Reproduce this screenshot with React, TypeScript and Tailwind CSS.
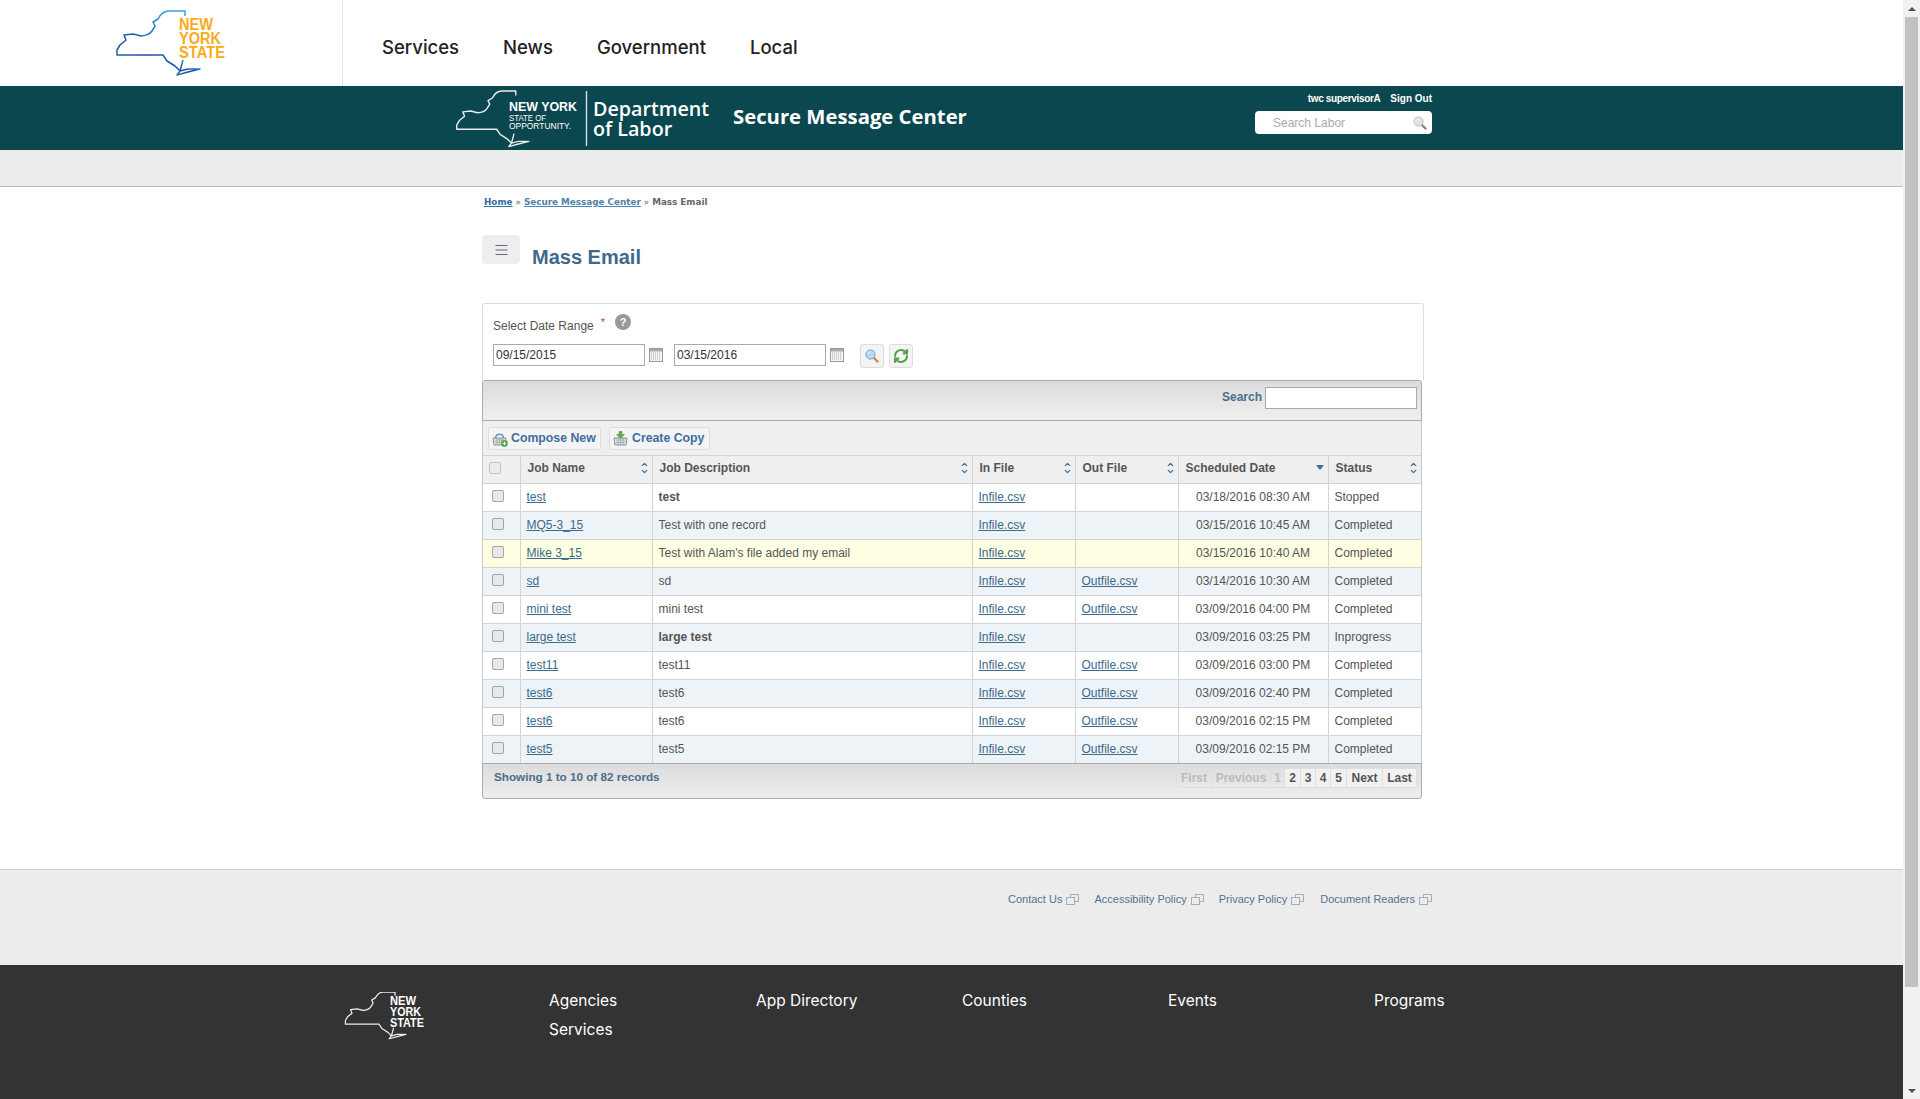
import { ChevronDown, ChevronUp, RefreshCw } from 'lucide-react';

const arial = 'font-["Liberation_Sans",Arial,sans-serif]';

const rows = [
  { name: 'test', desc: 'test', bold: true, out: false, date: '03/18/2016 08:30 AM', status: 'Stopped', bg: 'bg-white' },
  { name: 'MQ5-3_15', desc: 'Test with one record', bold: false, out: false, date: '03/15/2016 10:45 AM', status: 'Completed', bg: 'bg-[#eef3f8]' },
  { name: 'Mike 3_15', desc: "Test with Alam's file added my email", bold: false, out: false, date: '03/15/2016 10:40 AM', status: 'Completed', bg: 'bg-[#fefee2]' },
  { name: 'sd', desc: 'sd', bold: false, out: true, date: '03/14/2016 10:30 AM', status: 'Completed', bg: 'bg-[#eef3f8]' },
  { name: 'mini test', desc: 'mini test', bold: false, out: true, date: '03/09/2016 04:00 PM', status: 'Completed', bg: 'bg-white' },
  { name: 'large test', desc: 'large test', bold: true, out: false, date: '03/09/2016 03:25 PM', status: 'Inprogress', bg: 'bg-[#eef3f8]' },
  { name: 'test11', desc: 'test11', bold: false, out: true, date: '03/09/2016 03:00 PM', status: 'Completed', bg: 'bg-white' },
  { name: 'test6', desc: 'test6', bold: false, out: true, date: '03/09/2016 02:40 PM', status: 'Completed', bg: 'bg-[#eef3f8]' },
  { name: 'test6', desc: 'test6', bold: false, out: true, date: '03/09/2016 02:15 PM', status: 'Completed', bg: 'bg-white' },
  { name: 'test5', desc: 'test5', bold: false, out: true, date: '03/09/2016 02:15 PM', status: 'Completed', bg: 'bg-[#eef3f8]' },
];

const pages = [
  { label: 'First', width: 'w-[34px]', off: true },
  { label: 'Previous', width: 'w-[59px]', off: true },
  { label: '1', width: 'w-[14px]', off: true },
  { label: '2', width: 'w-[16px]', off: false },
  { label: '3', width: 'w-[15px]', off: false },
  { label: '4', width: 'w-[15px]', off: false },
  { label: '5', width: 'w-[16px]', off: false },
  { label: 'Next', width: 'w-[36px]', off: false },
  { label: 'Last', width: 'w-[34px]', off: false },
];

// state outline, units are px of the big header logo
function NyOutline({ stroke, width = 1.5 }: Readonly<{ stroke: string; width?: number }>) {
  return (
    <g fill="none" stroke={stroke} strokeWidth={width} strokeLinejoin="round">
      <path d="M85 16 L85 11 L69 11 C64 11 60 15 58 19 L53 22 L55 26 L52 31 C50 34 45 36 41 36 L33 34 L24 35 L26 40 L20 45 L17 50 L17 55 L63 55 L67 61 L75 66 L80 71" />
      <path d="M83 60 L80 71 L77 75 L88 72 L100 69 L88 69 L80 71" />
    </g>
  );
}

function SortIcon() {
  return (
    <span className="flex flex-col items-center text-[#47708f]">
      <ChevronUp size={9} strokeWidth={3.5} className="-mb-[2px]" />
      <ChevronDown size={9} strokeWidth={3.5} />
    </span>
  );
}

function CalendarIcon() {
  return (
    <svg width="14" height="14" viewBox="0 0 14 14" className="shrink-0">
      <rect x="0.5" y="0.5" width="13" height="13" fill="#f4f4f4" stroke="#999" />
      <rect x="1" y="1" width="12" height="2.5" fill="#aaa" />
      {[5, 7, 9, 11].map(y => (
        <path key={y} d={`M2 ${y}H12`} stroke="#aaa" strokeDasharray="1 1" />
      ))}
    </svg>
  );
}

function GlassIcon({ glass, rim, handle }: Readonly<{ glass: string; rim: string; handle: string }>) {
  return (
    <svg width="14" height="14" viewBox="0 0 14 14" className="shrink-0">
      <path d="M8.5 8.5L12.5 12.5" stroke={handle} strokeWidth="2.4" strokeLinecap="round" />
      <circle cx="5.5" cy="5.5" r="4.6" fill={glass} stroke={rim} />
      <path d="M3 5C3.3 3.8 4 3.2 5.2 3" fill="none" stroke="#fff" />
    </svg>
  );
}

function BasketIcon({ plus }: Readonly<{ plus?: boolean }>) {
  return (
    <svg width="16" height="16" viewBox="0 0 16 16" className="shrink-0">
      <path d="M1 7H14L13 14H2Z" fill="#dfe3e3" stroke="#8a9090" />
      <path d="M3 9H12M3 11.5H12M5 7V14M7.5 7V14M10 7V14" stroke="#9aa0a0" strokeWidth="0.7" />
      {plus ? (
        <>
          <path d="M3.5 7C4 2 11 2 11.5 7" fill="none" stroke="#5e94c4" strokeWidth="1.4" />
          <circle cx="12.5" cy="12.5" r="3.4" fill="#55a84a" />
          <path d="M10.7 12.5H14.3M12.5 10.7V14.3" stroke="#fff" strokeWidth="1" />
        </>
      ) : (
        <path d="M6 0.5H9V3.5H11.5L7.5 7.5L3.5 3.5H6Z" fill="#5fb24e" stroke="#3f8a35" strokeWidth="0.5" />
      )}
    </svg>
  );
}

function WindowIcon() {
  return (
    <svg width="13" height="11" viewBox="0 0 13 11" className="ml-[4px] shrink-0" fill="none" stroke="#a9adb0">
      <rect x="0.5" y="3.5" width="8" height="7" fill="#ececec" />
      <path d="M4.5 3.5V0.5H12.5V7.5H8.5" />
    </svg>
  );
}

function FooterLink({ label, className }: Readonly<{ label: string; className: string }>) {
  return (
    <span className={`flex items-center text-[11px] text-[#55738d] ${className}`}>
      {label}
      <WindowIcon />
    </span>
  );
}

function Checkbox({ faint }: Readonly<{ faint?: boolean }>) {
  return (
    <span
      className={`block h-3 w-3 rounded-[2px] border ${faint ? 'border-[#c4c4c4] bg-[#ebebeb]' : 'border-[#a3a3a3] bg-[#e9e9e9]'}`}
    />
  );
}

export default function App() {
  return (
    <div className={`flex h-[1099px] overflow-hidden bg-white ${arial}`}>
      <div className="w-[1903px] shrink-0">
        <header className="flex h-[86px] bg-white">
          <div className="h-full w-[343px] shrink-0 border-r border-[#e6e6e6] pl-[100px]">
            <svg width="150" height="85" viewBox="0 0 150 85">
              <defs>
                <linearGradient id="nyBlue" x1="0.8" y1="0" x2="0.2" y2="1">
                  <stop offset="0" stopColor="#36a3de" />
                  <stop offset="0.7" stopColor="#1d4f9f" />
                  <stop offset="1" stopColor="#1e6fb8" />
                </linearGradient>
              </defs>
              <NyOutline stroke="url(#nyBlue)" />
              <g fill="#fbab18" fontFamily="Liberation Sans" fontWeight="700" fontSize="16">
                <text x="79" y="30" textLength="34" lengthAdjust="spacingAndGlyphs">NEW</text>
                <text x="79" y="44" textLength="42" lengthAdjust="spacingAndGlyphs">YORK</text>
                <text x="79" y="58" textLength="46" lengthAdjust="spacingAndGlyphs">STATE</text>
              </g>
            </svg>
          </div>
          <nav className="flex items-center gap-[44px] pl-[39px] pt-[9px] font-['Inter',sans-serif] text-[18.5px] font-medium text-[#222]">
            <span>Services</span>
            <span>News</span>
            <span>Government</span>
            <span>Local</span>
          </nav>
        </header>

        <div className="flex h-[64px] items-start bg-[#0a474e] pl-[440px] text-white">
          <svg width="150" height="62" viewBox="0 0 150 62" className="mt-[3px] shrink-0">
            <g transform="translate(2 -7.5) scale(0.868)">
              <NyOutline stroke="#e8eeee" width={1.6} />
            </g>
            <g fill="#fff" fontFamily="Liberation Sans">
              <text x="69" y="22" fontSize="12.5" fontWeight="700" textLength="68" lengthAdjust="spacingAndGlyphs">NEW YORK</text>
              <text x="69" y="32" fontSize="9.5" textLength="37" lengthAdjust="spacingAndGlyphs">STATE OF</text>
              <text x="69" y="40" fontSize="9.5" textLength="62" lengthAdjust="spacingAndGlyphs">OPPORTUNITY.</text>
            </g>
            <path d="M146.5 2V57" stroke="#d5dfdf" strokeWidth="1.4" />
          </svg>
          <div className="ml-[3px] mt-[13px] w-[140px] shrink-0 font-['Open_Sans',sans-serif] text-[19.7px] font-semibold leading-[20px]">
            <div>Department</div>
            <div>of Labor</div>
          </div>
          <div className="mt-[17px] w-[522px] shrink-0 font-['Open_Sans',sans-serif] text-[20.3px] font-bold leading-[27px]">
            Secure Message Center
          </div>
          <div className="mt-[5px] flex w-[177px] shrink-0 flex-col items-end">
            <div className="flex h-[14px] items-center gap-[10px] text-[10px] font-bold">
              <span className="tracking-[-0.35px]">twc supervisorA</span>
              <span>Sign Out</span>
            </div>
            <div className="mt-[6px] flex h-[23px] w-full items-center justify-between rounded-[4px] bg-white pl-[18px] pr-[5px] text-[12px] text-[#aaa]">
              <span>Search Labor</span>
              <GlassIcon glass="#e4e4e4" rim="#bcbcbc" handle="#888" />
            </div>
          </div>
        </div>

        <div className="h-[37px] border-b border-[#bbb] bg-[#ececec]" />

        <main className="h-[682px] pl-[482px] pt-[9px]">
          <div className="flex h-[13px] items-center pl-[2px] font-['DejaVu_Sans',sans-serif] text-[8.8px] font-bold text-[#666]">
            <span className="text-[#326d9c] underline">Home</span>
            <span className="mx-[3px] font-normal">»</span>
            <span className="text-[#4b82ad] underline">Secure Message Center</span>
            <span className="mx-[3px] font-normal">»</span>
            <span>Mass Email</span>
          </div>

          <div className="mt-[26px] flex h-[68px] items-start">
            <div className="flex h-[29px] w-[38px] items-center justify-center rounded-[4px] bg-[#eeeeee]">
              <svg width="13" height="12" viewBox="0 0 13 12" stroke="#667">
                <path d="M0.5 1.5H12.5M0.5 6H12.5M0.5 10.5H12.5" />
              </svg>
            </div>
            <h1 className="ml-[12px] mt-[10px] text-[20px] font-bold leading-[24px] text-[#3d6a8c]">Mass Email</h1>
          </div>

          <div className="h-[77px] w-[942px] rounded-t-[3px] border border-b-0 border-[#ddd] px-[10px] text-[12px] text-[#555]">
            <div className="flex h-[40px] items-start">
              <span className="mt-[15px] leading-[14px]">Select Date Range</span>
              <span className="ml-[7px] mt-[11px] text-[11px] leading-[14px] text-[#d3345a]">*</span>
              <span className="ml-[10px] mt-[10px] flex h-4 w-4 items-center justify-center rounded-full bg-[#999] text-[11px] font-bold text-white">?</span>
            </div>
            <div className="flex items-start">
              <span className="flex h-[22px] w-[152px] items-center border border-[#aaa] pl-[2px] text-[#333]">09/15/2015</span>
              <span className="ml-[4px] mt-[4px]"><CalendarIcon /></span>
              <span className="ml-[11px] flex h-[22px] w-[152px] items-center border border-[#aaa] pl-[2px] text-[#333]">03/15/2016</span>
              <span className="ml-[4px] mt-[4px]"><CalendarIcon /></span>
              <span className="ml-[16px] flex h-6 w-6 items-center justify-center rounded-[3px] border border-[#ddd] bg-[#f4f4f4]">
                <GlassIcon glass="#bcd7f3" rim="#6ba3db" handle="#c98a3c" />
              </span>
              <span className="ml-[5px] flex h-6 w-6 items-center justify-center rounded-[3px] border border-[#ddd] bg-[#f4f4f4]">
                <RefreshCw size={16} strokeWidth={3.2} className="text-[#52a34a]" />
              </span>
            </div>
          </div>

          <div className="w-[940px] text-[12px] text-[#555]">
            <div className="flex h-[41px] items-start justify-end rounded-t-[3px] border border-[#aaa] bg-linear-to-b from-[#dcdcdc] to-[#efefef] pr-[4px] pt-[6px]">
              <span className="mr-[3px] mt-[3px] font-bold leading-[14px] text-[#4b6d8a]">Search</span>
              <span className="h-[22px] w-[152px] border border-[#aaa] bg-white" />
            </div>

            <div className="border-x border-[#c8c8c8]">
              <div className="flex h-[34px] items-center gap-[8px] bg-[#efefef] pl-[5px] pt-px text-[12.3px] font-bold text-[#3c6f9f]">
                <span className="flex h-[23px] w-[113px] items-center gap-[3px] rounded-[3px] border border-[#ddd] bg-[#f4f4f4] pl-[3px]">
                  <BasketIcon plus />
                  Compose New
                </span>
                <span className="flex h-[23px] w-[101px] items-center gap-[3px] rounded-[3px] border border-[#ddd] bg-[#f4f4f4] pl-[3px]">
                  <BasketIcon />
                  Create Copy
                </span>
              </div>

              <table className="w-full table-fixed border-collapse">
                <colgroup>
                  <col className="w-[37px]" />
                  <col className="w-[132px]" />
                  <col className="w-[320px]" />
                  <col className="w-[103px]" />
                  <col className="w-[103px]" />
                  <col className="w-[150px]" />
                  <col />
                </colgroup>
                <thead>
                  <tr className="h-[28px] border-y border-[#d3d3d3] bg-[#efefef] text-left font-bold">
                    <th className="pb-[4px] pl-[6px]"><Checkbox faint /></th>
                    {['Job Name', 'Job Description', 'In File', 'Out File', 'Scheduled Date', 'Status'].map(title => (
                      <th key={title} className="border-l border-[#d3d3d3] pb-[4px] pl-[7px] pr-[3px] font-bold">
                        <div className="flex items-center justify-between">
                          {title}
                          {title === 'Scheduled Date' ? (
                            <svg width="8" height="5" viewBox="0 0 8 5" className="mr-[1px]">
                              <path d="M0 0H8L4 5Z" fill="#47708f" />
                            </svg>
                          ) : (
                            <SortIcon />
                          )}
                        </div>
                      </th>
                    ))}
                  </tr>
                </thead>
                <tbody>
                  {rows.map((row, index) => (
                    <tr key={row.name + index} className={`h-[28px] border-b border-[#d3d3d3] ${row.bg}`}>
                      <td className="pl-[9px] pb-[4px] align-middle"><Checkbox /></td>
                      <td className="border-l border-[#d3d3d3] pb-px pl-[6px]">
                        <span className="text-[#3c6a8c] underline">{row.name}</span>
                      </td>
                      <td className={`border-l border-[#d3d3d3] pb-px pl-[6px] ${row.bold ? 'font-bold' : ''}`}>{row.desc}</td>
                      <td className="border-l border-[#d3d3d3] pb-px pl-[6px]">
                        <span className="text-[#3c6a8c] underline">Infile.csv</span>
                      </td>
                      <td className="border-l border-[#d3d3d3] pb-px pl-[6px]">
                        {row.out && <span className="text-[#3c6a8c] underline">Outfile.csv</span>}
                      </td>
                      <td className="border-l border-[#d3d3d3] pb-px text-center">{row.date}</td>
                      <td className="border-l border-[#d3d3d3] pb-px pl-[6px]">{row.status}</td>
                    </tr>
                  ))}
                </tbody>
              </table>
            </div>

            <div className="-mt-px flex h-[36px] items-start justify-between rounded-b-[3px] border border-[#aaa] bg-linear-to-b from-[#dcdcdc] to-[#eeeeee] pl-[11px] pr-[4px] font-bold">
              <span className="mt-[4px] text-[11.7px] text-[#4b6d8a]">Showing 1 to 10 of 82 records</span>
              <div className="mt-[4px] flex h-[20px] rounded-[3px] border border-[#dedede]">
                {pages.map((page, index) => (
                  <span
                    key={page.label}
                    className={`flex items-center justify-center ${page.width} ${index > 0 ? 'border-l border-[#dedede]' : ''} ${page.off ? 'text-[#bbb]' : 'bg-[#f1f1f1] text-[#555]'}`}
                  >
                    {page.label}
                  </span>
                ))}
              </div>
            </div>
          </div>
        </main>

        <div className="h-[96px] border-t border-[#d0d0d0] bg-[#ececec] pt-[22px]">
          <div className="flex h-[15px] items-center">
            <FooterLink label="Contact Us" className="ml-[1008px]" />
            <FooterLink label="Accessibility Policy" className="ml-[15px]" />
            <FooterLink label="Privacy Policy" className="ml-[15px]" />
            <FooterLink label="Document Readers" className="ml-[16px]" />
          </div>
        </div>

        <footer className="flex h-[134px] bg-[#333] pl-[341px] pt-[27px] font-['Inter',sans-serif] text-[15.5px] text-white">
          <svg width="208" height="56" viewBox="0 0 208 56" className="shrink-0">
            <g transform="translate(-8 -8) scale(0.73)">
              <NyOutline stroke="#eee" width={1.7} />
            </g>
            <g fill="#fff" fontFamily="Liberation Sans" fontWeight="700" fontSize="12">
              <text x="49" y="13" textLength="26" lengthAdjust="spacingAndGlyphs">NEW</text>
              <text x="49" y="24" textLength="31" lengthAdjust="spacingAndGlyphs">YORK</text>
              <text x="49" y="35" textLength="34" lengthAdjust="spacingAndGlyphs">STATE</text>
            </g>
          </svg>
          <div className="grid w-[1030px] grid-cols-[207px_206px_206px_206px_auto] content-start gap-y-[11px] leading-[18px]">
            <span>Agencies</span>
            <span>App Directory</span>
            <span>Counties</span>
            <span>Events</span>
            <span>Programs</span>
            <span>Services</span>
          </div>
        </footer>
      </div>

      <aside className="flex w-[17px] shrink-0 flex-col items-center bg-[#f1f1f1]">
        <div className="flex h-[17px] items-center justify-center">
          <svg width="8" height="4" viewBox="0 0 8 4"><path d="M0 4H8L4 0Z" fill="#505050" /></svg>
        </div>
        <div className="h-[970px] w-[13px] bg-[#c1c1c1]" />
        <div className="mt-[95px] flex h-[17px] items-center justify-center">
          <svg width="8" height="4" viewBox="0 0 8 4"><path d="M0 0H8L4 4Z" fill="#505050" /></svg>
        </div>
      </aside>
    </div>
  );
}
